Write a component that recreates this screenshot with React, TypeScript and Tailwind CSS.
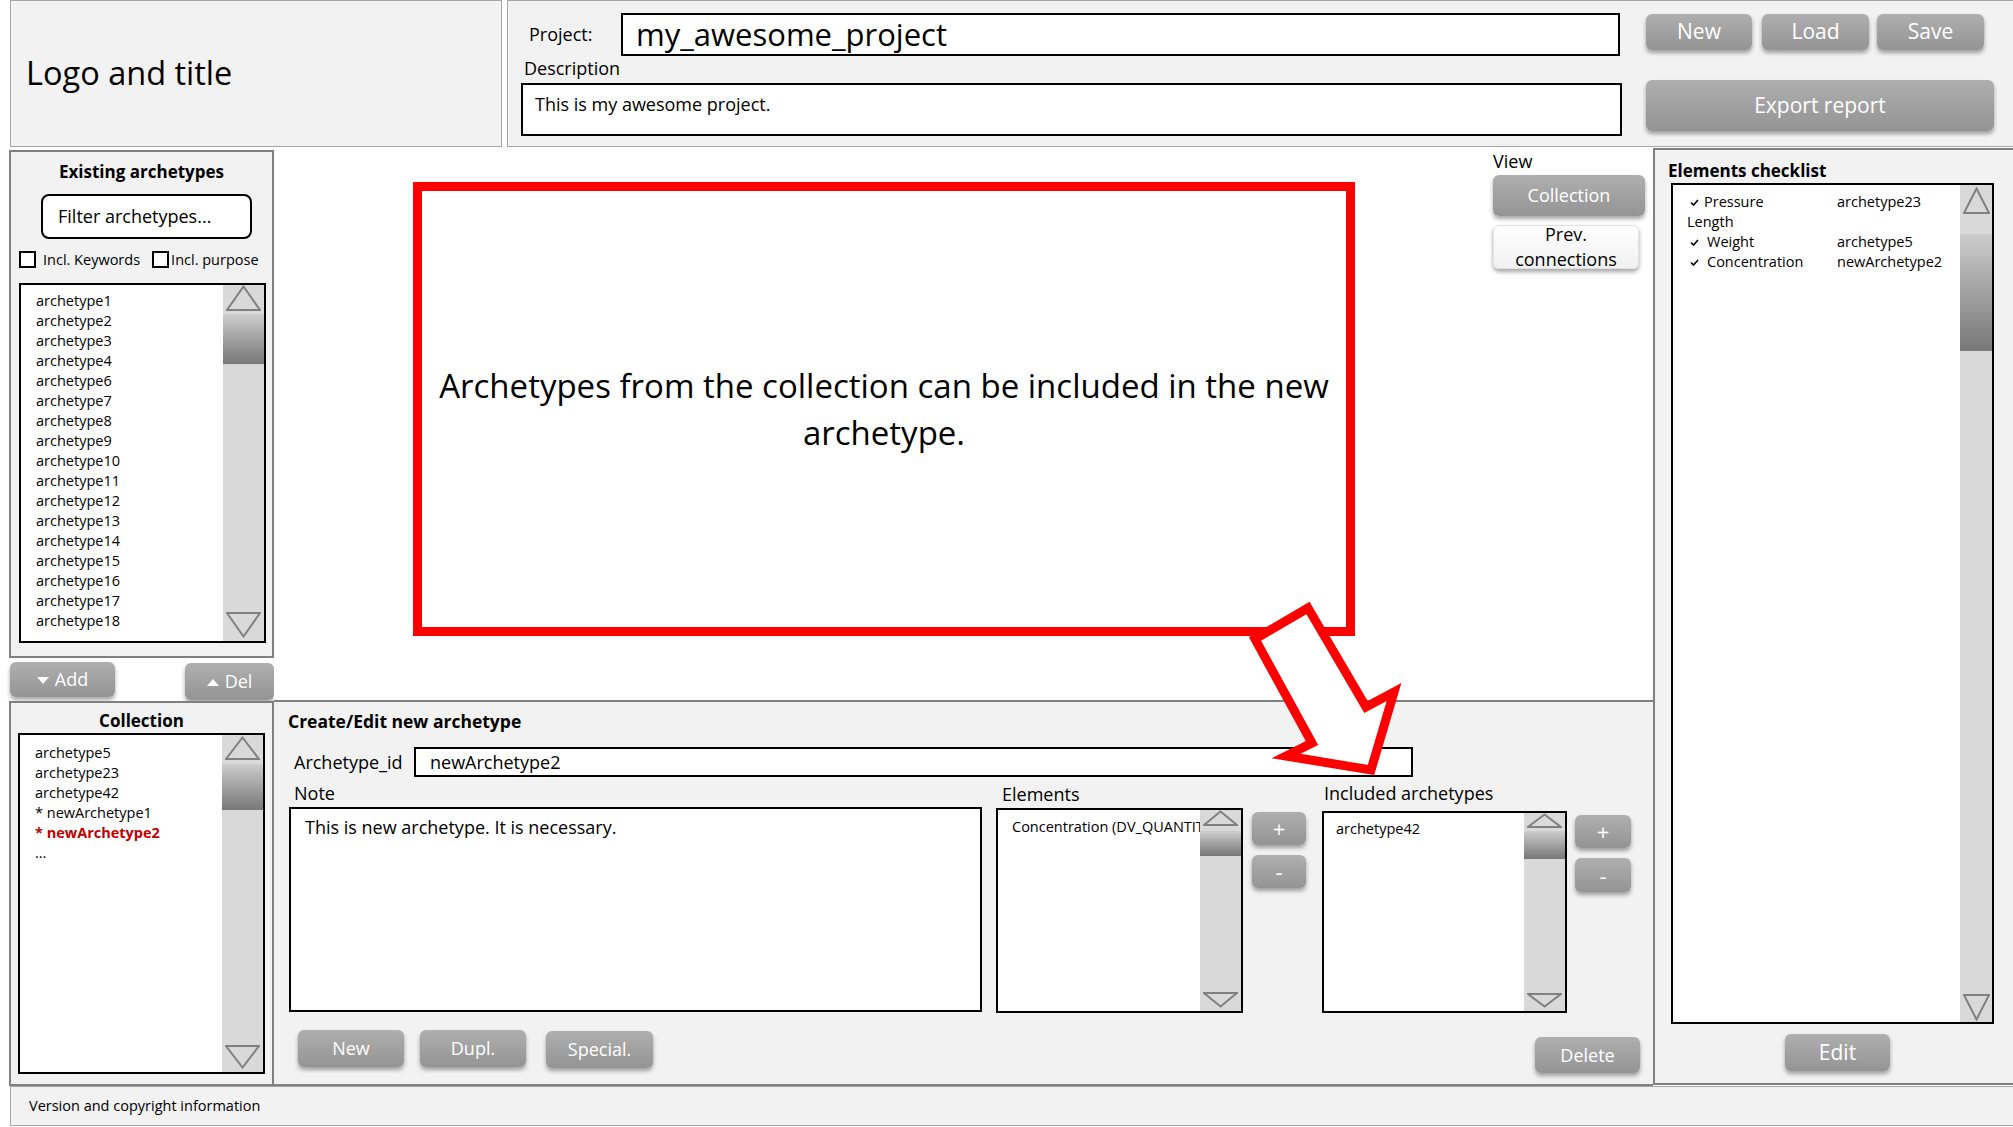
import React from 'react';

// scrollbar like the mockup: outlined triangles, gradient thumb
function ScrollBar({
  className,
  thumb,
  triW,
  triH,
}: {
  className: string;
  thumb: string;
  triW: number;
  triH: number;
}) {
  return (
    <div className={`flex shrink-0 flex-col items-center bg-[#d9d9d9] ${className}`}>
      <svg width={triW} height={triH} viewBox={`0 0 ${triW} ${triH}`}>
        <polygon
          points={`${triW / 2},1.5 ${triW - 1},${triH - 1} 1,${triH - 1}`}
          fill="none"
          stroke="#808080"
          strokeWidth="2"
        />
      </svg>
      <div className={`w-full bg-linear-to-b from-[#cdcdcd] to-[#787878] ${thumb}`} />
      <div className="flex-1" />
      <svg width={triW} height={triH} viewBox={`0 0 ${triW} ${triH}`}>
        <polygon
          points={`1,1 ${triW - 1},1 ${triW / 2},${triH - 1.5}`}
          fill="none"
          stroke="#808080"
          strokeWidth="2"
        />
      </svg>
    </div>
  );
}

function GreyBtn({ className, children }: { className: string; children: React.ReactNode }) {
  return (
    <div
      className={`flex items-center justify-center rounded-[6px] bg-linear-to-b from-[#afafaf] to-[#949494] text-white shadow-[0_3px_4px_rgba(0,0,0,0.35)] ${className}`}
    >
      {children}
    </div>
  );
}

function Tick() {
  return (
    <svg width="9" height="7" viewBox="0 0 9 7" className="shrink-0">
      <path d="M1 3.5 L3.5 6 L8 1" fill="none" stroke="#000" strokeWidth="1.6" />
    </svg>
  );
}

const existing = [
  'archetype1',
  'archetype2',
  'archetype3',
  'archetype4',
  'archetype6',
  'archetype7',
  'archetype8',
  'archetype9',
  'archetype10',
  'archetype11',
  'archetype12',
  'archetype13',
  'archetype14',
  'archetype15',
  'archetype16',
  'archetype17',
  'archetype18',
];

export default function App() {
  return (
    <div className="relative h-[1127px] w-[2013px] overflow-hidden bg-white font-['Open_Sans',sans-serif] text-black">
      {/* header */}
      <div className="flex h-[147px] gap-[5px] pl-[10px]">
        <div className="flex w-[492px] items-center border border-[#a6a6a6] bg-[#f2f2f2] pl-[15px] text-[32.5px]">
          Logo and title
        </div>
        <div className="flex flex-1 border border-r-0 border-[#a6a6a6] bg-[#f2f2f2]">
          <div className="pl-[13px] pt-[12px]">
            <div className="flex h-[43px] items-center">
              <div className="w-[100px] pl-[8px] text-[18px]">Project:</div>
              <div className="flex h-[43px] w-[999px] items-center border-2 border-black bg-white pl-[13px] text-[31px]">
                my_awesome_project
              </div>
            </div>
            <div className="pl-[3px] text-[18px] leading-[24px]">Description</div>
            <div className="mt-[3px] h-[53px] w-[1101px] border-2 border-black bg-white pl-[12px] pt-[7px] text-[18px] leading-[24px]">
              This is my awesome project.
            </div>
          </div>
          <div className="ml-[24px] pt-[13px]">
            <div className="flex">
              <GreyBtn className="h-[36px] w-[106px] text-[21px]">New</GreyBtn>
              <GreyBtn className="ml-[10px] h-[36px] w-[107px] text-[21px]">Load</GreyBtn>
              <GreyBtn className="ml-[8px] h-[36px] w-[107px] text-[21px]">Save</GreyBtn>
            </div>
            <GreyBtn className="mt-[30px] h-[51px] w-[348px] text-[21px]">Export report</GreyBtn>
          </div>
        </div>
      </div>

      <div className="flex h-[939px]">
        {/* left column */}
        <div className="flex w-[274px] flex-col pl-[9px]">
          <div className="mt-[3px] flex h-[508px] flex-col border-2 border-[#808080] bg-[#f2f2f2]">
            <div className="mt-[8px] text-center text-[17px] font-bold leading-[24px]">Existing archetypes</div>
            <div className="ml-[30px] mt-[10px] flex h-[45px] w-[211px] items-center rounded-[8px] border-2 border-black bg-white pl-[15px] text-[18px]">
              Filter archetypes...
            </div>
            <div className="ml-[8px] mt-[12px] flex h-[17px] items-center text-[14.5px]">
              <div className="h-[17px] w-[17px] border-2 border-black bg-white" />
              <span className="ml-[7px]">Incl. Keywords</span>
              <div className="ml-[12px] h-[17px] w-[17px] border-2 border-black bg-white" />
              <span className="ml-[2px]">Incl. purpose</span>
            </div>
            <div className="ml-[8px] mt-[15px] flex h-[360px] w-[247px] border-2 border-black bg-white">
              <div className="flex-1 pl-[15px] pt-[6px] text-[14.5px] leading-[20px]">
                {existing.map((a) => (
                  <div key={a}>{a}</div>
                ))}
              </div>
              <ScrollBar className="w-[41px] pb-[3px]" thumb="mt-[3px] h-[50px]" triW={35} triH={26} />
            </div>
          </div>
          <div className="flex h-[43px] items-start justify-between">
            <GreyBtn className="ml-[1px] mt-[4px] h-[35px] w-[105px] text-[18px]">
              <svg width="12" height="7" viewBox="0 0 12 7" className="mr-[6px] mt-[2px]">
                <polygon points="0,0 12,0 6,7" fill="#fff" />
              </svg>
              Add
            </GreyBtn>
            <GreyBtn className="mt-[5px] h-[37px] w-[89px] text-[18px]">
              <svg width="12" height="7" viewBox="0 0 12 7" className="mr-[6px] mt-[2px]">
                <polygon points="0,7 12,7 6,0" fill="#fff" />
              </svg>
              Del
            </GreyBtn>
          </div>
          <div className="flex h-[385px] flex-col border-2 border-[#808080] bg-[#f2f2f2]">
            <div className="mt-[6px] text-center text-[17px] font-bold leading-[24px]">Collection</div>
            <div className="ml-[7px] flex h-[341px] w-[247px] border-2 border-black bg-white">
              <div className="flex-1 pl-[15px] pt-[8px] text-[14.5px] leading-[20px]">
                <div>archetype5</div>
                <div>archetype23</div>
                <div>archetype42</div>
                <div>* newArchetype1</div>
                <div className="font-bold text-[#c00000]">* newArchetype2</div>
                <div>...</div>
              </div>
              <ScrollBar className="w-[41px] pb-[3px] pt-[1px]" thumb="mt-[4px] h-[46px]" triW={35} triH={24} />
            </div>
          </div>
        </div>

        {/* center column */}
        <div className="flex flex-1 flex-col">
          <div className="flex h-[553px] bg-white">
            <div className="ml-[139px] mt-[35px] flex h-[454px] w-[942px] shrink-0 items-center justify-center border-[9px] border-[#ff0000] px-[10px] text-center text-[33px] leading-[47px]">
              Archetypes from the collection can be included in the new archetype.
            </div>
            <div className="ml-[138px] mt-[2px] flex flex-col items-start">
              <div className="text-[18px] leading-[24px]">View</div>
              <GreyBtn className="mt-[2px] h-[41px] w-[152px] text-[18px]">Collection</GreyBtn>
              <div className="mt-[9px] flex h-[44px] w-[146px] flex-col items-center justify-center rounded-[6px] border border-[#e2e2e2] bg-linear-to-b from-white to-[#f1f1f1] text-[18px] leading-[25px] shadow-[0_3px_4px_rgba(0,0,0,0.35)]">
                <span>Prev.</span>
                <span>connections</span>
              </div>
            </div>
          </div>

          <div className="h-[386px] border-y-2 border-[#808080] bg-[#f2f2f2] pl-[14px]">
            <div className="pt-[7px] text-[17.5px] font-bold leading-[24px]">Create/Edit new archetype</div>
            <div className="mt-[14px] flex h-[30px] items-center">
              <div className="ml-[6px] w-[120px] text-[18px]">Archetype_id</div>
              <div className="flex h-[30px] w-[999px] items-center border-2 border-black bg-white pl-[14px] text-[18px]">
                newArchetype2
              </div>
            </div>
            <div className="mt-[4px] flex items-start">
              <div className="ml-[1px] w-[693px]">
                <div className="pl-[5px] text-[18px] leading-[24px]">Note</div>
                <div className="mt-[2px] h-[205px] border-2 border-black bg-white pl-[14px] pt-[6px] text-[18px] leading-[24px]">
                  This is new archetype. It is necessary.
                </div>
              </div>
              <div className="ml-[14px] w-[247px] pt-[1px]">
                <div className="pl-[6px] text-[18px] leading-[24px]">Elements</div>
                <div className="mt-[2px] flex h-[205px] border-2 border-black bg-white">
                  <div className="min-w-0 flex-1 overflow-hidden whitespace-nowrap pl-[14px] pt-[7px] text-[14.5px] leading-[20px]">
                    Concentration (DV_QUANTITY)
                  </div>
                  <ScrollBar className="w-[41px] pb-[3px]" thumb="mt-[5px] h-[25px]" triW={35} triH={16} />
                </div>
              </div>
              <div className="ml-[9px] w-[54px] pt-[31px]">
                <GreyBtn className="h-[33px] w-[54px] text-[22px]">+</GreyBtn>
                <GreyBtn className="mt-[10px] h-[33px] w-[54px] text-[22px]">-</GreyBtn>
              </div>
              <div className="ml-[16px] w-[245px]">
                <div className="pl-[2px] text-[18px] leading-[24px]">Included archetypes</div>
                <div className="mt-[6px] flex h-[202px] border-2 border-black bg-white">
                  <div className="min-w-0 flex-1 pl-[12px] pt-[6px] text-[14.5px] leading-[20px]">archetype42</div>
                  <ScrollBar className="w-[41px] pb-[3px]" thumb="mt-[3px] h-[28px]" triW={35} triH={15} />
                </div>
              </div>
              <div className="ml-[8px] w-[56px] pt-[34px]">
                <GreyBtn className="h-[33px] w-[56px] text-[22px]">+</GreyBtn>
                <GreyBtn className="mt-[10px] h-[34px] w-[56px] text-[22px]">-</GreyBtn>
              </div>
            </div>
            <div className="mt-[17px] flex items-start">
              <GreyBtn className="ml-[10px] h-[37px] w-[106px] text-[18px]">New</GreyBtn>
              <GreyBtn className="ml-[16px] h-[37px] w-[106px] text-[18px]">Dupl.</GreyBtn>
              <GreyBtn className="ml-[20px] mt-[1px] h-[37px] w-[107px] text-[18px]">Special.</GreyBtn>
              <GreyBtn className="ml-auto mr-[13px] mt-[7px] h-[36px] w-[105px] text-[18px]">Delete</GreyBtn>
            </div>
          </div>
        </div>

        {/* right column */}
        <div className="mt-[1px] h-[937px] w-[360px] border-y-2 border-l-2 border-[#808080] bg-[#f2f2f2] pl-[13px]">
          <div className="pt-[9px] text-[17px] font-bold leading-[24px]">Elements checklist</div>
          <div className="ml-[3px] flex h-[841px] w-[323px] border-2 border-black bg-white">
            <div className="flex-1 pl-[14px] pt-[7px] text-[14.5px] leading-[20px]">
              <div className="flex h-[20px] items-center">
                <div className="flex w-[150px] items-center pl-[3px]">
                  <Tick />
                  <span className="ml-[5px]">Pressure</span>
                </div>
                <span>archetype23</span>
              </div>
              <div className="h-[20px]">Length</div>
              <div className="flex h-[20px] items-center">
                <div className="flex w-[150px] items-center pl-[3px]">
                  <Tick />
                  <span className="ml-[8px]">Weight</span>
                </div>
                <span>archetype5</span>
              </div>
              <div className="flex h-[20px] items-center">
                <div className="flex w-[150px] items-center pl-[3px]">
                  <Tick />
                  <span className="ml-[8px]">Concentration</span>
                </div>
                <span>newArchetype2</span>
              </div>
            </div>
            <ScrollBar className="w-[32px] pb-[1px] pt-[2px]" thumb="mt-[20px] h-[117px]" triW={27} triH={27} />
          </div>
          <GreyBtn className="ml-[117px] mt-[10px] h-[37px] w-[105px] text-[21px]">Edit</GreyBtn>
        </div>
      </div>

      {/* footer */}
      <div className="ml-[10px] flex h-[40px] items-center border border-r-0 border-[#a6a6a6] bg-[#f2f2f2] pl-[18px] text-[14.5px]">
        Version and copyright information
      </div>

      {/* callout arrow over everything */}
      <svg className="pointer-events-none absolute left-0 top-0" width="2013" height="1127">
        <polygon
          points="1308,608 1366,707 1394,692 1371,770 1286,756 1312,743 1255,639"
          fill="#fff"
          stroke="#ff0000"
          strokeWidth="9"
          strokeLinejoin="miter"
        />
      </svg>
    </div>
  );
}
